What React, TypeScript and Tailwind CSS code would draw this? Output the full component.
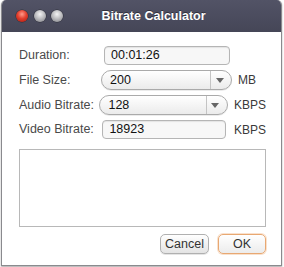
import React from "react";

function Light({ color }: { color: "red" | "gray" }) {
  const bg =
    color === "red"
      ? "bg-[radial-gradient(circle_at_50%_35%,#ff9a8a_0%,#e2402e_45%,#a8160c_100%)]"
      : "bg-[radial-gradient(circle_at_50%_35%,#f4f4f4_0%,#b9b9bc_50%,#7d7e84_100%)]";
  return <div className={`w-3 h-3 rounded-full shadow-[0_0_0_0.5px_#2e2f38] ${bg}`} />;
}

function TextBox({ value }: { value: string }) {
  return (
    <div className="ml-[3px] w-[126px] h-[19px] rounded-[4px] border border-[#b5b5b5] bg-[#f7f7f7] shadow-[inset_0_1px_1px_rgba(0,0,0,0.08)] flex items-center pl-[6px] text-[12.5px] text-[#111]">
      {value}
    </div>
  );
}

function Combo({ value }: { value: string }) {
  return (
    <div className="w-[131px] h-[20px] rounded-full border border-[#aaa] bg-gradient-to-b from-[#ffffff] to-[#ebebeb] flex items-center shadow-[0_1px_0_rgba(0,0,0,0.08)]">
      <div className="flex-1 pl-[8px] text-[12.5px] text-[#111]">{value}</div>
      <div className="w-[21px] h-full border-l border-[#c4c4c4] flex items-center justify-center pr-[3px]">
        <svg width="8" height="5" viewBox="0 0 8 5">
          <path d="M0 0 H8 L4 5 Z" fill="#666" />
        </svg>
      </div>
    </div>
  );
}

function Row({ label, children, unit }: { label: string; children: React.ReactNode; unit?: string }) {
  return (
    <div className="flex items-center">
      <div className="w-[82px] text-[12.5px] text-[#4a4a4a]">{label}</div>
      {children}
      {unit && <div className="ml-[6px] text-[12px] text-[#3a3a3a]">{unit}</div>}
    </div>
  );
}

export default function App() {
  return (
    <div className="w-[284px] h-[267px] bg-white font-['Liberation_Sans',Arial,sans-serif]">
      <div className="ml-px w-[281px] h-[266px] flex flex-col rounded-t-[5px] overflow-hidden border border-t-0 border-[#8a8a8e] shadow-[0_1px_2px_rgba(0,0,0,0.35)]">
        <div className="h-8 shrink-0 bg-gradient-to-b from-[#525366] to-[#454657] relative flex items-center">
          <div className="flex items-center gap-[5.5px] pl-[14px]">
            <Light color="red" />
            <Light color="gray" />
            <Light color="gray" />
          </div>
          <div className="absolute inset-0 flex items-center justify-center pl-[24px] text-white font-bold text-[12.5px] [text-shadow:0_-1px_0_rgba(0,0,0,0.4)]">
            Bitrate Calculator
          </div>
        </div>
        <div className="flex-1 bg-white flex flex-col pl-[17px] pr-[15px] pt-[14px]">
          <div className="flex flex-col gap-[5px]">
            <Row label="Duration:">
              <TextBox value="00:01:26" />
            </Row>
            <Row label="File Size:" unit="MB">
              <Combo value="200" />
            </Row>
            <Row label="Audio Bitrate:" unit="KBPS">
              <Combo value="128" />
            </Row>
            <Row label="Video Bitrate:" unit="KBPS">
              <TextBox value="18923" />
              <div className="w-[2px]" />
            </Row>
          </div>
          <div className="mt-[10px] h-[78px] border border-[#b8b8b8] bg-white" />
          <div className="mt-[7px] flex justify-end gap-[9px]">
            <button className="w-[49px] h-[20px] rounded-[5px] border border-[#b0b0b0] bg-gradient-to-b from-[#ffffff] to-[#e4e4e4] text-[12.5px] text-[#333] shadow-[0_1px_0_rgba(0,0,0,0.1)]">
              Cancel
            </button>
            <button className="w-[48px] h-[20px] rounded-[5px] border border-[#e8a872] bg-gradient-to-b from-[#ffffff] to-[#ececec] text-[12.5px] text-[#333] shadow-[0_0_0_1px_rgba(240,180,130,0.4)]">
              OK
            </button>
          </div>
        </div>
      </div>
    </div>
  );
}
